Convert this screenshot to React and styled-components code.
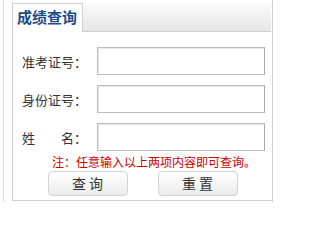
import React from 'react';
import styled, { createGlobalStyle } from 'styled-components';

const GlobalStyle = createGlobalStyle`
  body {
    margin: 0;
    background: #fff;
    font-family: "Noto Sans CJK SC", "DejaVu Sans", sans-serif;
  }
`;

const Wrapper = styled.div`
  box-sizing: border-box;
  margin-left: 3px;
  width: 270px;
  height: 202px;
  padding: 3px 0 0 8px;
  border-left: 1px solid #dadada;
  border-right: 1px solid #cfcfcf;
`;

const Panel = styled.div`
  box-sizing: border-box;
  height: 198px;
  border-left: 1px solid #cfcfcf;
  border-bottom: 1px solid #cfcfcf;
`;

const Header = styled.div`
  display: flex;
  height: 29px;
`;

const Tab = styled.div`
  box-sizing: border-box;
  width: 70px;
  height: 29px;
  border-top: 1px solid #cfcfcf;
  border-right: 1px solid #cfcfcf;
  background: #fff;
  color: #1b4d89;
  font-size: 15px;
  font-weight: bold;
  line-height: 26px;
  padding-left: 4px;
  white-space: nowrap;
`;

const HeaderFill = styled.div`
  flex: 1;
  box-sizing: border-box;
  border-bottom: 1px solid #cfcfcf;
  background: linear-gradient(#fbfbfb, #e6e6e6);
  margin-right: 1px;
`;

const Form = styled.form`
  display: flex;
  flex-direction: column;
  gap: 10px;
  padding-top: 15px;
`;

const Row = styled.div`
  display: flex;
  align-items: center;
  padding-left: 9px;
`;

const Label = styled.label`
  width: 65px;
  margin-right: 10px;
  font-size: 13px;
  color: #333;
  white-space: pre;
`;

const Input = styled.input`
  box-sizing: border-box;
  width: 168px;
  height: 28px;
  border: 1px solid #bcbcbc;
  border-right-color: #a8a8a8;
  box-shadow: inset 1px 1px 1px #e6e6e6;
  background: #fff;
  padding: 0 4px;
  outline: none;
`;

const Note = styled.div`
  margin-top: 4px;
  padding-left: 39px;
  font-size: 12px;
  line-height: 14px;
  color: #cc0000;
  white-space: nowrap;
`;

const Buttons = styled.div`
  display: flex;
  justify-content: center;
  gap: 30px;
  margin-top: 2px;
`;

const Button = styled.button`
  box-sizing: border-box;
  width: 80px;
  height: 25px;
  border: 1px solid #d2d2d2;
  border-radius: 4px;
  background: linear-gradient(#ffffff, #ebebeb);
  color: #333;
  font-family: inherit;
  font-size: 14px;
  line-height: 23px;
  padding: 0;
  cursor: pointer;
`;

const fields = [
  { name: 'zkzh', label: '准考证号：' },
  { name: 'sfzh', label: '身份证号：' },
  { name: 'xm', label: '姓　　名：' },
];

const App = () => (
  <>
    <GlobalStyle />
    <Wrapper>
      <Panel>
        <Header>
          <Tab>成绩查询</Tab>
          <HeaderFill />
        </Header>
        <Form onSubmit={(e) => e.preventDefault()}>
          {fields.map((f) => (
            <Row key={f.name}>
              <Label htmlFor={f.name}>{f.label}</Label>
              <Input id={f.name} name={f.name} />
            </Row>
          ))}
        </Form>
        <Note>注：任意输入以上两项内容即可查询。</Note>
        <Buttons>
          <Button type="button">查 询</Button>
          <Button type="button">重 置</Button>
        </Buttons>
      </Panel>
    </Wrapper>
  </>
);

export default App;
